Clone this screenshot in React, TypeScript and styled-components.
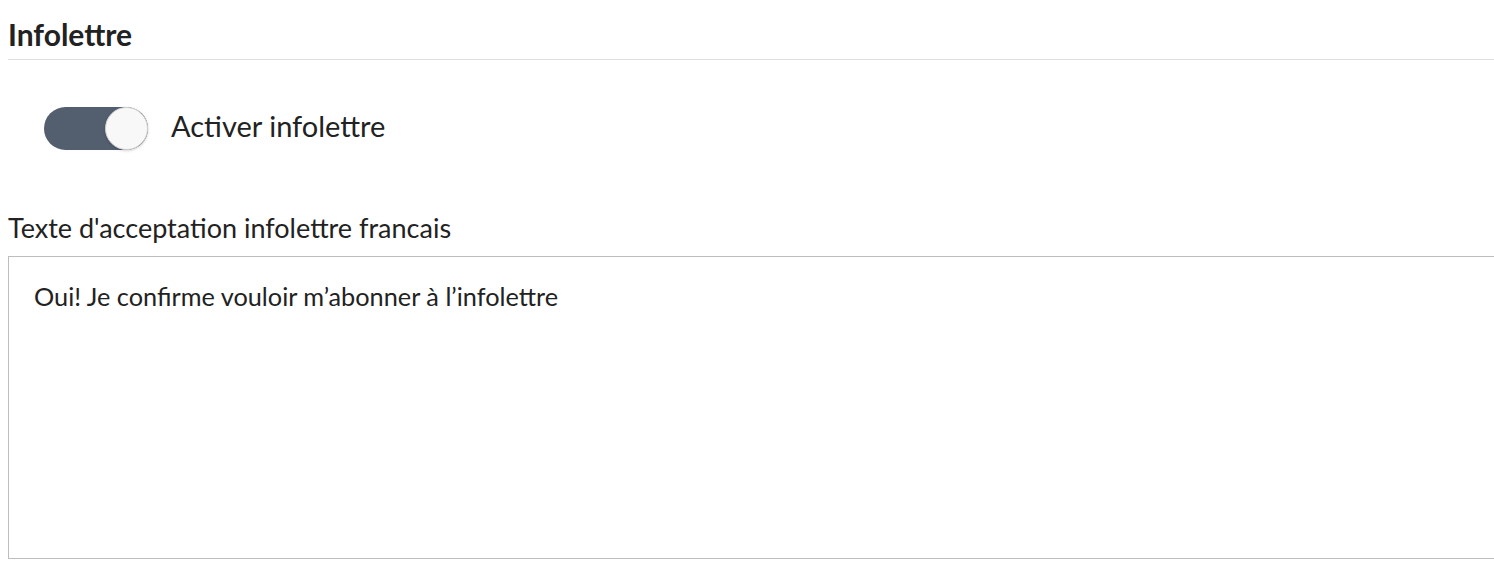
import { useState } from "react";
import styled, { createGlobalStyle } from "styled-components";

const GlobalStyle = createGlobalStyle`
  html, body {
    overflow: hidden;
  }
  body {
    margin: 0;
    background: #ffffff;
    font-family: Lato, "Open Sans", "Liberation Sans", sans-serif;
    color: #222222;
  }
`;

const Page = styled.div`
  padding: 16px 0 0 8px;
`;

const SectionTitle = styled.h2`
  margin: 0;
  font-size: 30px;
  line-height: 36px;
  font-weight: 700;
  color: #222222;
  padding-bottom: 7px;
  border-bottom: 1px solid #dedede;
`;

const ToggleRow = styled.label`
  display: flex;
  align-items: center;
  gap: 23px;
  margin: 47px 0 0 36px;
  cursor: pointer;
`;

const Track = styled.span<{ $on: boolean }>`
  position: relative;
  width: 104px;
  height: 43px;
  border-radius: 22px;
  background: ${(p) => (p.$on ? "#535f6f" : "#d5d8dc")};
  transition: background 0.2s ease;
  flex-shrink: 0;
`;

const Knob = styled.span<{ $on: boolean }>`
  position: absolute;
  top: 0;
  left: ${(p) => (p.$on ? "61px" : "0")};
  width: 41px;
  height: 41px;
  border-radius: 50%;
  background: #f8f8f8;
  border: 1px solid #d4d4d4;
  box-shadow: 0 1px 3px rgba(0, 0, 0, 0.18);
  transition: left 0.2s ease;
`;

const ToggleText = styled.span`
  font-size: 29px;
  line-height: 35px;
  padding-bottom: 7px;
  color: #222222;
`;

const Field = styled.div`
  margin-top: 62px;
  margin-right: -40px;
`;

const FieldLabel = styled.div`
  font-size: 27px;
  line-height: 32px;
  color: #222222;
  margin-bottom: 12px;
`;

const TextArea = styled.textarea`
  display: block;
  box-sizing: border-box;
  width: 100%;
  height: 303px;
  border: 1px solid #bdbdbd;
  border-radius: 0;
  padding: 24px 25px;
  font-family: Lato, "Open Sans", "Liberation Sans", sans-serif;
  font-size: 25.3px;
  line-height: 30px;
  color: #222222;
  resize: none;
  outline: none;
`;

export default function App() {
  const [on, setOn] = useState(true);
  const [text, setText] = useState("Oui! Je confirme vouloir m’abonner à l’infolettre");

  return (
    <Page>
      <GlobalStyle />
      <SectionTitle>Infolettre</SectionTitle>
      <ToggleRow onClick={() => setOn((v) => !v)}>
        <Track $on={on}>
          <Knob $on={on} />
        </Track>
        <ToggleText>Activer infolettre</ToggleText>
      </ToggleRow>
      <Field>
        <FieldLabel>Texte d'acceptation infolettre francais</FieldLabel>
        <TextArea value={text} onChange={(e) => setText(e.target.value)} />
      </Field>
    </Page>
  );
}
